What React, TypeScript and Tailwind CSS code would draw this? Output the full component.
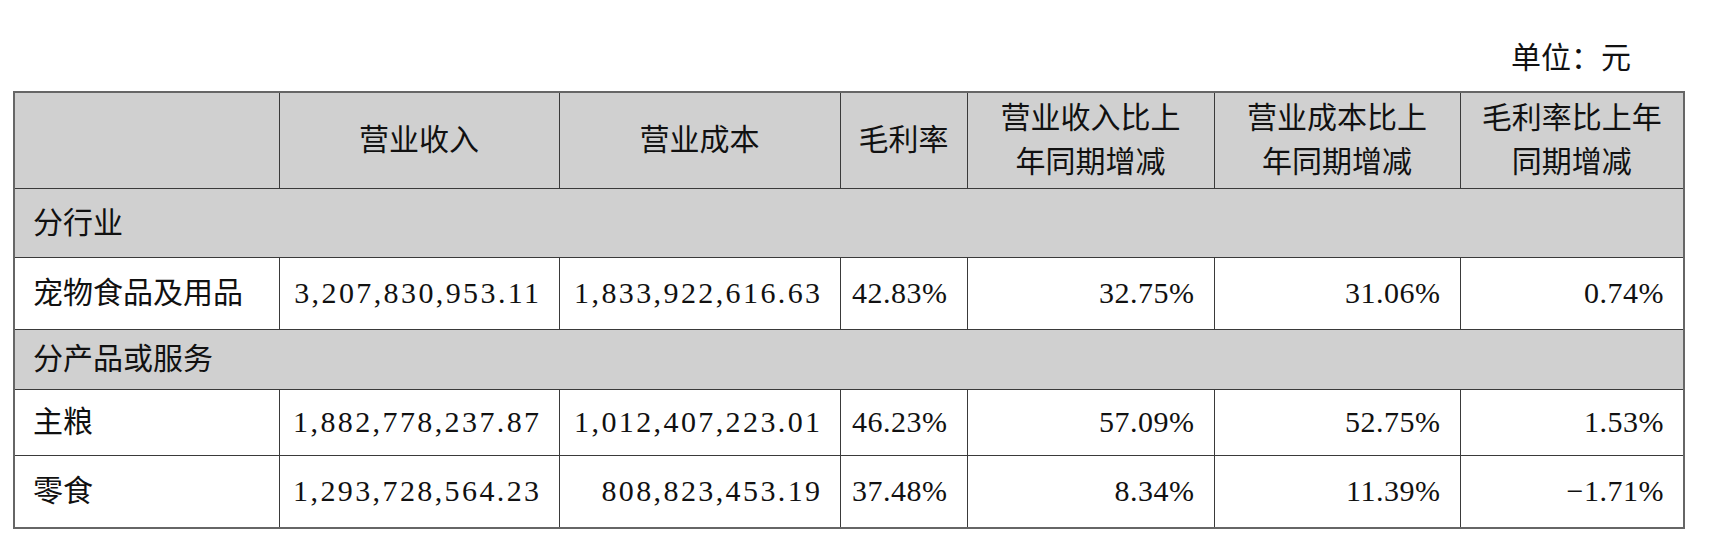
const font = { fontFamily: '"Liberation Serif", "Noto Sans CJK SC", serif' }

type Row = {
  label: string
  values: string[]
}

const industryRows: Row[] = [
  {
    label: '宠物食品及用品',
    values: ['3,207,830,953.11', '1,833,922,616.63', '42.83%', '32.75%', '31.06%', '0.74%'],
  },
]

const productRows: Row[] = [
  {
    label: '主粮',
    values: ['1,882,778,237.87', '1,012,407,223.01', '46.23%', '57.09%', '52.75%', '1.53%'],
  },
  {
    label: '零食',
    values: ['1,293,728,564.23', '808,823,453.19', '37.48%', '8.34%', '11.39%', '−1.71%'],
  },
]

function DataRow({ row, height }: { row: Row; height: string }) {
  return (
    <tr className={height}>
      <td className="border border-[#3a3a3a] pl-[18px] text-left">{row.label}</td>
      {row.values.map((v, i) => (
        <td
          key={i}
          className={
            'border border-[#3a3a3a] text-right ' +
            (i < 2 ? 'tracking-[2.4px] pr-[17px]' : 'tracking-[0.5px] pr-[19px]')
          }
        >
          {v}
        </td>
      ))}
    </tr>
  )
}

function SectionRow({ label, height }: { label: string; height: string }) {
  return (
    <tr className={height + ' bg-[#d0d0d0]'}>
      <td colSpan={7} className="border border-[#3a3a3a] pl-[18px] text-left">
        {label}
      </td>
    </tr>
  )
}

export default function App() {
  return (
    <div className="w-[1710px] h-[544px] bg-white text-[#111] text-[30px]" style={font}>
      {/* Unit */}
      <div className="h-[91px] flex justify-end pt-[41px] pr-[79px] leading-[34px]">
        单位：元
      </div>

      {/* Table */}
      <div className="pl-[13px]">
        <table className="table-fixed border-collapse w-[1670px] border-2 border-[#666]">
          <colgroup>
            <col className="w-[265px]" />
            <col className="w-[280px]" />
            <col className="w-[281px]" />
            <col className="w-[127px]" />
            <col className="w-[247px]" />
            <col className="w-[246px]" />
            <col className="w-[224px]" />
          </colgroup>
          <thead>
            <tr className="h-[96px] bg-[#d0d0d0] leading-[44px]">
              <th className="border border-[#3a3a3a] font-normal"></th>
              <th className="border border-[#3a3a3a] font-normal">营业收入</th>
              <th className="border border-[#3a3a3a] font-normal">营业成本</th>
              <th className="border border-[#3a3a3a] font-normal">毛利率</th>
              <th className="border border-[#3a3a3a] font-normal">
                营业收入比上
                <br />
                年同期增减
              </th>
              <th className="border border-[#3a3a3a] font-normal">
                营业成本比上
                <br />
                年同期增减
              </th>
              <th className="border border-[#3a3a3a] font-normal">
                毛利率比上年
                <br />
                同期增减
              </th>
            </tr>
          </thead>
          <tbody className="leading-[34px]">
            <SectionRow label="分行业" height="h-[69px]" />
            {industryRows.map((r) => (
              <DataRow key={r.label} row={r} height="h-[72px]" />
            ))}
            <SectionRow label="分产品或服务" height="h-[60px]" />
            <DataRow row={productRows[0]} height="h-[66px]" />
            <DataRow row={productRows[1]} height="h-[73px]" />
          </tbody>
        </table>
      </div>
    </div>
  )
}
